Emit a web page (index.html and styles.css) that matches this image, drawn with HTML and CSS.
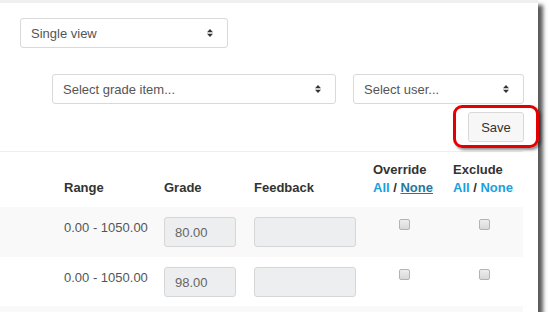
FILE: index.html
```html
<!DOCTYPE html>
<html lang="en">
<head>
  <meta charset="UTF-8">
  <title>Single view</title>
  <link rel="stylesheet" href="styles.css">
</head>
<body>

<div class="frame">
  <div class="view-row">
    <div class="select select-view">
      <span>Single view</span>
      <svg class="arrows" width="6" height="8" viewBox="0 0 6 8"><path d="M0 3.2 L3 0 L6 3.2 Z M0 4.8 L6 4.8 L3 8 Z" fill="#333"/></svg>
    </div>
  </div>

  <div class="filter-row">
    <div class="select select-item">
      <span>Select grade item...</span>
      <svg class="arrows" width="6" height="8" viewBox="0 0 6 8"><path d="M0 3.2 L3 0 L6 3.2 Z M0 4.8 L6 4.8 L3 8 Z" fill="#333"/></svg>
    </div>
    <div class="select select-user">
      <span>Select user...</span>
      <svg class="arrows" width="6" height="8" viewBox="0 0 6 8"><path d="M0 3.2 L3 0 L6 3.2 Z M0 4.8 L6 4.8 L3 8 Z" fill="#333"/></svg>
    </div>
  </div>

  <div class="save-row">
    <button class="btn-save">Save</button>
  </div>

  <!-- marca roja del tutorial -->
  <div class="highlight"></div>

  <div class="table-wrap">
    <div class="grades">
      <div class="row head">
        <div class="cell"></div>
        <div class="cell">Range</div>
        <div class="cell">Grade</div>
        <div class="cell">Feedback</div>
        <div class="cell">Override<br><a class="link">All</a> / <a class="link active">None</a></div>
        <div class="cell">Exclude<br><a class="link">All</a> / <a class="link">None</a></div>
      </div>
      <div id="filas"></div>
    </div>
  </div>
</div>

<script>
  const filas = [
    { rango: "0.00 - 1050.00", nota: "80.00" },
    { rango: "0.00 - 1050.00", nota: "98.00" }
  ];

  const contenedor = document.getElementById("filas");

  filas.forEach((fila) => {
    const div = document.createElement("div");
    div.classList.add("row");
    div.innerHTML = `
      <div class="cell"></div>
      <div class="cell range">${fila.rango}</div>
      <div class="cell"><input class="field field-grade" type="text" value="${fila.nota}" disabled></div>
      <div class="cell"><input class="field field-feedback" type="text" disabled></div>
      <div class="cell"><input class="check" type="checkbox"></div>
      <div class="cell"><input class="check" type="checkbox"></div>
    `;
    contenedor.appendChild(div);
  });

  // la siguiente fila queda cortada por el borde de la captura
  const resto = document.createElement("div");
  resto.classList.add("row");
  contenedor.appendChild(resto);
</script>

</body>
</html>
```

FILE: styles.css
```css
body {
  margin: 0;
  background: #fff;
  font-family: "Liberation Sans", Arial, sans-serif;
  font-size: 13px;
  color: #333;
}

.frame {
  position: relative;
  width: 538px;
  height: 312px;
  box-sizing: border-box;
  background: #fff;
  border-top: 3px solid #efefef;
  box-shadow: 5px 5px 4px rgba(0, 0, 0, 0.65);
  display: flex;
  flex-direction: column;
}

.view-row {
  padding: 15px 0 0 20px;
}

.select {
  display: flex;
  align-items: center;
  justify-content: space-between;
  box-sizing: border-box;
  height: 30px;
  padding: 0 14px 0 10px;
  border: 1px solid #d9d9d9;
  border-radius: 3px;
  color: #555;
  background: #fff;
}

.select-view {
  width: 208px;
}

.filter-row {
  display: flex;
  justify-content: flex-end;
  gap: 17px;
  margin-top: 26px;
  padding-right: 14px;
}

.select-item {
  width: 284px;
}

.select-user {
  width: 171px;
}

.save-row {
  display: flex;
  justify-content: flex-end;
  margin-top: 8px;
  padding-right: 14px;
}

.btn-save {
  width: 56px;
  height: 30px;
  font-family: inherit;
  font-size: 13px;
  color: #333;
  background: #f7f7f7;
  border: 1px solid #d9d9d9;
  border-radius: 3px;
}

.highlight {
  position: absolute;
  left: 453px;
  top: 102px;
  width: 80px;
  height: 37px;
  border: 3px solid #e40000;
  border-radius: 9px;
  box-shadow: 2px 2px 3px rgba(0, 0, 0, 0.45);
}

.table-wrap {
  flex: 1;
  min-height: 0;
  overflow: hidden;
  margin-top: 9px;
}

.grades {
  width: 523px;
  border-top: 1px solid #eee;
}

.row {
  display: grid;
  grid-template-columns: 64px 100px 90px 119px 80px 70px;
  line-height: 18px;
}

.row.head {
  height: 55px;
  align-items: end;
  font-weight: bold;
}

.row.head .cell {
  padding-bottom: 10px;
}

#filas .row {
  height: 49px;
}

#filas .row:nth-child(odd) {
  background: #f9f9f9;
  height: 50px;
}

#filas .cell {
  padding-top: 10px;
}

.range {
  padding-top: 12px !important;
  color: #555;
}

.link {
  color: #1aa0dc;
  text-decoration: none;
}

.link.active {
  color: #25789e;
  text-decoration: underline;
}

.field {
  box-sizing: border-box;
  height: 30px;
  margin: 0;
  padding: 0 10px;
  font-family: inherit;
  font-size: 13px;
  color: #666;
  background: #eceeef;
  border: 1px solid #d6d6d6;
  border-radius: 3px;
}

.field-grade {
  width: 72px;
}

.field-feedback {
  width: 102px;
}

.check {
  appearance: none;
  display: block;
  width: 11px;
  height: 11px;
  margin: 2px 0 0 26px;
  background: linear-gradient(#eee, #d8d8d8);
  border: 1px solid #b3b3b3;
  border-radius: 2px;
  box-sizing: border-box;
}
```
